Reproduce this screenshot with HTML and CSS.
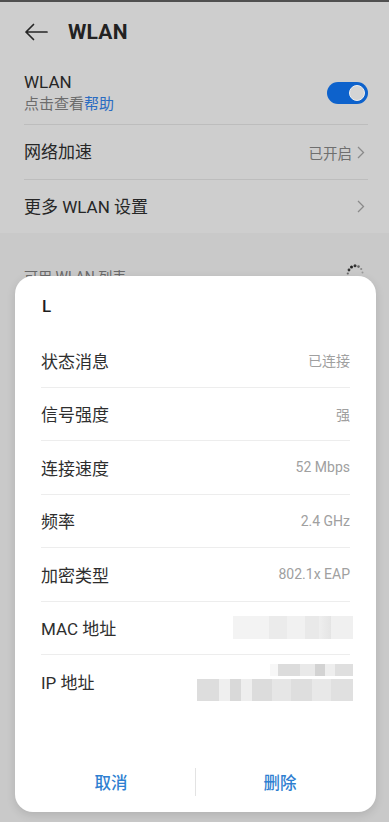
FILE: index.html
```html
<!DOCTYPE html>
<html lang="zh-CN">
<head>
<meta charset="utf-8">
<title>WLAN</title>
<link rel="stylesheet" href="styles.css">
</head>
<body>
<div class="screen">
  <div class="status"></div>
  <header class="header">
    <svg class="back" width="24" height="24" viewBox="0 0 24 24"><path d="M23 12H2M9.5 4.5L2 12l7.5 7.5" fill="none" stroke="#262626" stroke-width="1.7" stroke-linecap="round" stroke-linejoin="round"/></svg>
    <h1 class="title">WLAN</h1>
  </header>
  <section class="card">
    <div class="row row-wlan">
      <div class="texts">
        <div class="label">WLAN</div>
        <div class="sub">点击查看<span class="link">帮助</span></div>
      </div>
      <div class="toggle"><span class="knob"></span></div>
    </div>
    <div class="row row-line">
      <div class="label">网络加速</div>
      <div class="right"><span class="val">已开启</span><svg class="chev" width="8" height="13" viewBox="0 0 8 13"><path d="M1 1l5.5 5.5L1 12" fill="none" stroke="#8a8a8a" stroke-width="1.3"/></svg></div>
    </div>
    <div class="row row-last">
      <div class="label">更多 WLAN 设置</div>
      <div class="right"><svg class="chev" width="8" height="13" viewBox="0 0 8 13"><path d="M1 1l5.5 5.5L1 12" fill="none" stroke="#8a8a8a" stroke-width="1.3"/></svg></div>
    </div>
  </section>
  <section class="avail">
    <div class="avail-head">
      <span class="avail-title">可用 WLAN 列表</span>
      <svg class="spin" width="24" height="24" viewBox="0 0 24 24">
        <circle cx="6" cy="9" r="1.4" fill="#333"/>
        <circle cx="8.5" cy="6" r="1.5" fill="#222"/>
        <circle cx="12" cy="4.8" r="1.5" fill="#333"/>
        <circle cx="15.5" cy="5.6" r="1.3" fill="#666"/>
        <circle cx="18.2" cy="8" r="1.1" fill="#888"/>
        <circle cx="19.5" cy="11.5" r="1" fill="#999"/>
        <circle cx="4.8" cy="12.5" r="1.1" fill="#666"/>
      </svg>
    </div>
  </section>

  <div class="dialog">
    <div class="d-title">L</div>
    <div class="d-row"><span class="d-label">状态消息</span><span class="d-val">已连接</span></div>
    <div class="d-row"><span class="d-label">信号强度</span><span class="d-val">强</span></div>
    <div class="d-row"><span class="d-label">连接速度</span><span class="d-val">52 Mbps</span></div>
    <div class="d-row"><span class="d-label">频率</span><span class="d-val">2.4 GHz</span></div>
    <div class="d-row"><span class="d-label">加密类型</span><span class="d-val">802.1x EAP</span></div>
    <div class="d-row"><span class="d-label">MAC 地址</span><span class="blur blur-mac"></span></div>
    <div class="d-row d-row-last"><span class="d-label">IP 地址</span>
      <span class="blur-ip"><span class="blur blur-ip1"></span><span class="blur blur-ip2"></span></span>
    </div>
    <div class="buttons">
      <button class="btn">取消</button>
      <span class="vsep"></span>
      <button class="btn">删除</button>
    </div>
  </div>
</div>
</body>
</html>
```
FILE: styles.css
```css
* { box-sizing: border-box; }
html, body { margin: 0; padding: 0; }
body {
  width: 389px;
  height: 822px;
  overflow: hidden;
  background: #c9c9c9;
  font-family: Roboto, "Noto Sans CJK SC", sans-serif;
  color: #262626;
}
.screen { position: relative; width: 389px; height: 822px; }
.status { height: 2px; background: #505050; }
.header {
  height: 60px;
  display: flex;
  align-items: center;
  padding-left: 24px;
  background: #cecece;
}
.back { display: block; }
.title {
  margin: 0 0 0 20px;
  font-size: 21px;
  font-weight: 700;
  color: #222;
  letter-spacing: 0.2px;
}
.card {
  background: #cecece;
  padding: 0 21px 0 24px;
}
.row {
  display: flex;
  align-items: center;
  justify-content: space-between;
}
.row-wlan { height: 63px; border-bottom: 1px solid #bdbdbd; }
.row-line { height: 55px; border-bottom: 1px solid #bdbdbd; }
.row-last { height: 53px; }
.label { font-size: 17px; line-height: 22px; color: #262626; }
.sub { font-size: 15px; line-height: 22px; color: #6c6c6c; }
.link { color: #2a6cc2; }
.right { display: flex; align-items: center; gap: 5px; padding-right: 3px; }
.val { font-size: 14.5px; color: #6f6f6f; }
.chev { display: block; }
.toggle {
  width: 41px;
  height: 22px;
  border-radius: 11px;
  background: #0d62cc;
  position: relative;
}
.knob {
  position: absolute;
  right: 3px;
  top: 3px;
  width: 16px;
  height: 16px;
  border-radius: 50%;
  background: #d4d4d4;
  border: 1.5px solid #f0f0f0;
}
.avail { padding: 0 21px 0 24px; }
.avail-head {
  padding-top: 25px;
  height: 60px;
  display: flex;
  justify-content: space-between;
  align-items: flex-start;
}
.avail-title { font-size: 14px; line-height: 24px; color: #6a6a6a; padding-top: 7px; }
.spin { display: block; margin-right: 1px; margin-top: 3px; }

.dialog {
  position: absolute;
  left: 15px;
  top: 276px;
  width: 361px;
  height: 536px;
  background: #ffffff;
  border-radius: 18px;
  box-shadow: 0 3px 10px rgba(0,0,0,0.12);
  display: flex;
  flex-direction: column;
  padding: 0 26px;
}
.d-title {
  height: 58px;
  font-size: 17px;
  font-weight: 500;
  line-height: 60px;
  padding-left: 1px;
  color: #1e1e1e;
}
.d-row {
  height: 53.5px;
  display: flex;
  align-items: center;
  justify-content: space-between;
  border-bottom: 1px solid #ededed;
  flex-shrink: 0;
}
.d-row-last { border-bottom: none; }
.d-label { font-size: 17px; color: #2e2e2e; }
.d-val { font-size: 14px; color: #a0a0a0; }
.blur { display: block; }
.blur-mac {
  width: 120px;
  height: 23px;
  margin-right: -3px;
  background: linear-gradient(90deg, #f3f3f3 0, #f3f3f3 30%, #ebebeb 30%, #ebebeb 45%, #f1f1f1 45%, #f1f1f1 60%, #e9e9e9 60%, #e9e9e9 72%, #eeeeee 72%, #e4e4e4 82%, #f0f0f0 82%);
}
.blur-ip { display: flex; flex-direction: column; align-items: flex-end; margin-right: -3px; margin-top: 2px; }
.blur-ip1 {
  width: 83px;
  height: 12px;
  background: linear-gradient(90deg, #f7f7f7 0, #f7f7f7 10%, #dcdcdc 10%, #dcdcdc 36%, #e9e9e9 36%, #e9e9e9 54%, #d3d3d3 54%, #d3d3d3 66%, #eeeeee 66%, #eeeeee 78%, #dfdfdf 78%);
}
.blur-ip2 {
  width: 156px;
  height: 22px;
  margin-top: 3px;
  background: linear-gradient(90deg, #dddddd 0, #dddddd 14%, #efefef 14%, #efefef 21%, #d9d9d9 21%, #d9d9d9 28%, #eeeeee 28%, #eeeeee 35%, #dcdcdc 35%, #dcdcdc 48%, #e6e6e6 48%, #e6e6e6 60%, #dedede 60%, #dedede 74%, #e8e8e8 74%, #e8e8e8 86%, #e0e0e0 86%);
}
.buttons {
  margin-top: auto;
  height: 56px;
  padding: 0 0 4px 0;
  margin-left: -14px;
  margin-right: -14px;
  display: flex;
  align-items: center;
}
.btn {
  flex: 1;
  border: none;
  background: transparent;
  font-family: Roboto, "Noto Sans CJK SC", sans-serif;
  font-size: 16.5px;
  font-weight: 500;
  color: #2f7fd1;
  padding: 0;
  height: 52px;
}
.vsep { width: 1px; height: 28px; background: #e3e3e3; }
```
